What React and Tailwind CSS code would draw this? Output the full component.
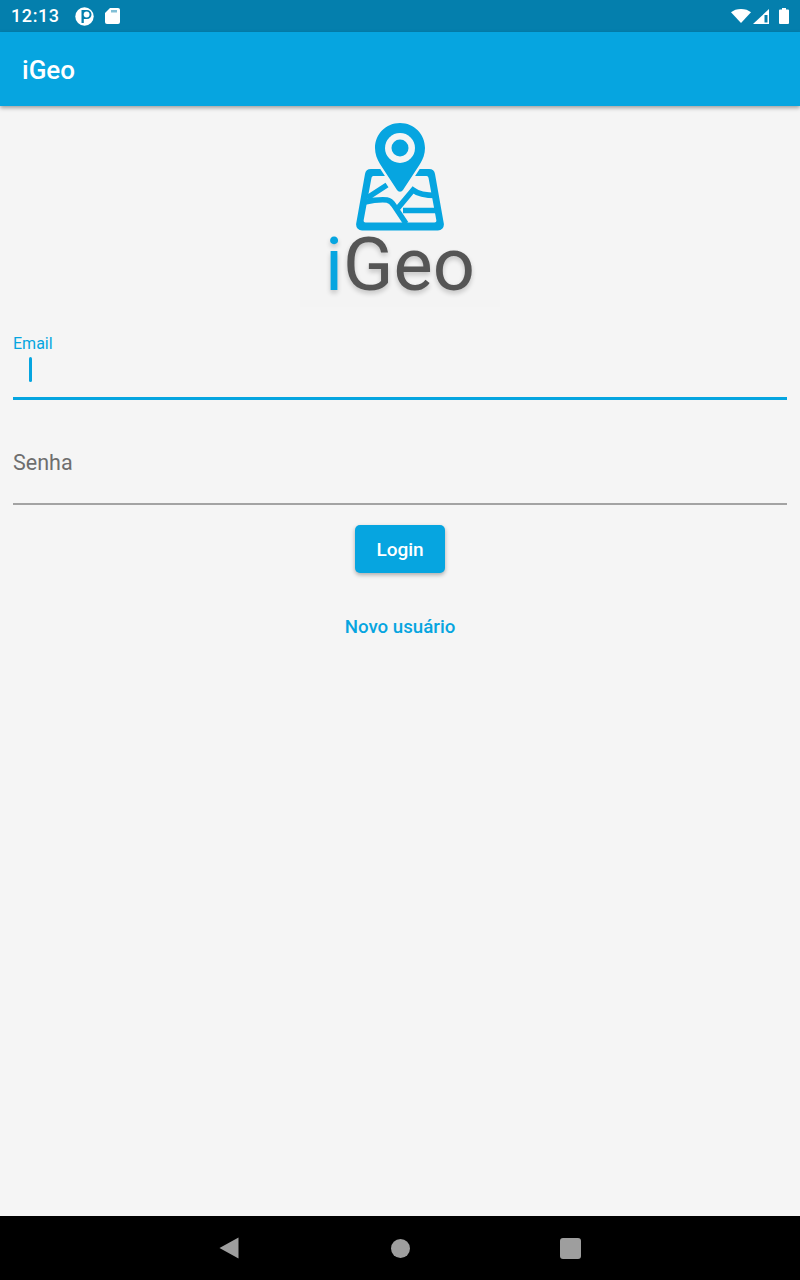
import React from 'react';

const BLUE = '#06a5e0';
const PAPER = '#f4f4f4';

const StatusBar = () => (
  <div className="flex h-8 items-center justify-between bg-[#047fad] pl-[11px] pr-[11px] text-white">
    <div className="flex items-center">
      <span className="text-[18px] font-medium leading-none tracking-[0.6px]">12:13</span>
      {/* app notification glyph */}
      <svg className="ml-[15px]" width="19" height="19" viewBox="0 0 19 19">
        <circle cx="9.5" cy="9.5" r="9.200" fill="#fff" />
        <path d="M6.500 3h5.500a4.500 4.500 0 0 1 4.500 4.500v0a4.500 4.500 0 0 1-4.500 4.500H8.800V16H6.500z" fill="#047fad" />
        <circle cx="11.600" cy="7.500" r="2.900" fill="#fff" />
      </svg>
      {/* sd card */}
      <svg className="ml-[11px]" width="15" height="16" viewBox="0 0 15 16">
        <path d="M5 0h8a2 2 0 0 1 2 2v12a2 2 0 0 1-2 2H2a2 2 0 0 1-2-2V5z" fill="#fff" />
        <path d="M6.500 2h1v2.500h-1zM8.500 2h1v2.500h-1zM10.500 2h1v2.500h-1z" fill="#047fad" />
      </svg>
    </div>
    <div className="flex items-center">
      <svg width="20" height="14" viewBox="0 0 20 14">
        <path d="M0 3.300C2.500 1.200 6 0 10 0s7.500 1.200 10 3.300L10 14z" fill="#fff" />
      </svg>
      <svg className="ml-[2px]" width="16" height="15" viewBox="0 0 16 15">
        <path d="M16 0v15H0z" fill="#fff" />
        <path d="M11.500 6h3v7.500h-3z" fill="#047fad" />
      </svg>
      <svg className="ml-[10px]" width="10" height="16" viewBox="0 0 10 16">
        <path d="M3 0h4v1.500h2a1 1 0 0 1 1 1V15a1 1 0 0 1-1 1H1a1 1 0 0 1-1-1V2.500a1 1 0 0 1 1-1h2z" fill="#fff" />
      </svg>
    </div>
  </div>
);

const Logo = () => (
  <div className="mx-auto flex h-[200px] w-[200px] flex-col items-center bg-[#f4f4f4]">
    <svg className="mt-[16px] shrink-0" width="90" height="109" viewBox="0 0 90 109">
      {/* map sheet */}
      <path
        d="M16 46h58a6 6 0 0 1 6 5l8.800 49.500a6 6 0 0 1-6 7H7.200a6 6 0 0 1-6-7L10 51a6 6 0 0 1 6-5z"
        fill={BLUE}
      />
      <path
        d="M18.500 53h53a2 2 0 0 1 2 1.700L81.300 97a2 2 0 0 1-2 2.400H10.700a2 2 0 0 1-2-2.400L16.500 54.700a2 2 0 0 1 2-1.700z"
        fill={PAPER}
      />
      {/* roads */}
      <path
        d="M12 75l20-13M10 79c9-2 16-2.500 22-2 3 .5 5 2.500 7 5.500l12 18M43 85l15-18c5 4 13 5.500 23 5.500M48 87.500h34"
        fill="none"
        stroke={BLUE}
        strokeWidth="5.500"
      />
      {/* pin, with a paper coloured halo over the sheet */}
      <path
        d="M45 0c14 0 25 11 25 25 0 6-2 11-5 16L48 67a3.500 3.500 0 0 1-6 0L25 41c-3-5-5-10-5-16C20 11 31 0 45 0z"
        fill={BLUE}
        stroke={PAPER}
        strokeWidth="5"
        paintOrder="stroke"
      />
      <circle cx="45" cy="25" r="15" fill={PAPER} />
      <circle cx="45" cy="25" r="8.500" fill={BLUE} />
    </svg>
    <div className="mt-[-4px] text-[74px] leading-[74px] [text-shadow:0_3px_5px_rgba(0,0,0,0.2)]">
      <span className="text-[#06a5e0]">i</span>
      <span className="text-[#555555]">Geo</span>
    </div>
  </div>
);

const App = () => (
  <div className="flex h-[1280px] w-[800px] flex-col overflow-hidden bg-[#f5f5f5] font-['Roboto',sans-serif]">
    <StatusBar />

    {/* App bar */}
    <header className="z-10 flex h-[74px] shrink-0 items-center bg-[#06a5e0] px-[22px] shadow-[0_2px_4px_rgba(0,0,0,0.35)]">
      <h1 className="mt-[2px] text-[26px] font-medium text-white">iGeo</h1>
    </header>

    <main className="flex-1 pt-[1px]">
      <Logo />

      <div className="mt-[27px] px-[13px]">
        {/* Email, focused */}
        <div className="h-[66px] border-b-[3px] border-[#06a5e0]">
          <label className="block text-[16px] leading-[19px] text-[#06a5e0]">Email</label>
          <div className="ml-[16px] mt-[4px] h-[25px] w-[3px] rounded-full bg-[#06a5e0]" />
        </div>

        {/* Senha */}
        <div className="mt-[39px] h-[66px] border-b-[2px] border-[#a3a3a3]">
          <label className="block pt-[1px] text-[21.5px] leading-[45px] text-[#6e6e6e]">Senha</label>
        </div>
      </div>

      <div className="mt-[20px] flex flex-col items-center">
        <button className="h-[48px] w-[90px] rounded-[5px] bg-[#06a5e0] pt-[2px] text-[19px] font-medium text-white shadow-[0_2px_4px_rgba(0,0,0,0.3)]">
          Login
        </button>
        <button className="mt-[41px] text-[18.7px] font-medium leading-[27px] text-[#06a5e0]">
          Novo usuário
        </button>
      </div>
    </main>

    {/* Android nav bar */}
    <nav className="relative flex h-[64px] shrink-0 items-center bg-black">
      <svg className="ml-[219px]" width="20" height="22" viewBox="0 0 20 22">
        <path d="M19.500 0.500v21L0.500 11z" fill="#9e9e9e" />
      </svg>
      <div className="ml-[152px] h-[19px] w-[19px] rounded-full bg-[#9e9e9e]" />
      <div className="ml-[150px] h-[21px] w-[21px] rounded-[3px] bg-[#9e9e9e]" />
    </nav>
  </div>
);

export default App;
